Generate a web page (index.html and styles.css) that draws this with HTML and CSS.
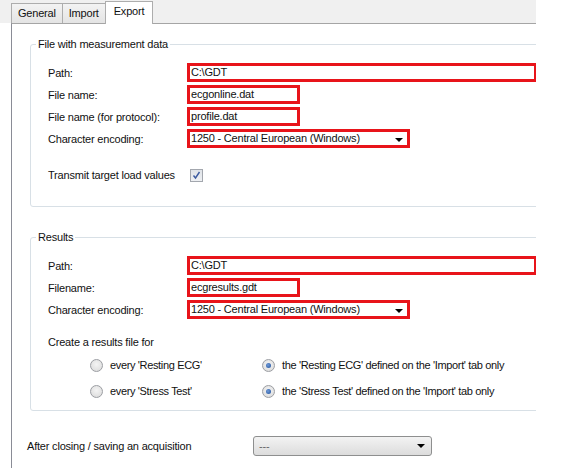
FILE: index.html
```html
<!DOCTYPE html>
<html>
<head>
<meta charset="utf-8">
<link rel="stylesheet" href="styles.css">
</head>
<body>
<div class="window">
  <div class="tabstrip">
    <div class="tab">General</div>
    <div class="tab">Import</div>
    <div class="tab active">Export</div>
  </div>
  <div class="panel">
    <fieldset class="group group-file">
      <legend>File with measurement data</legend>
      <div class="form">
        <span class="lbl">Path:</span><div class="field wide">C:\GDT</div>
        <span class="lbl">File name:</span><div class="field short">ecgonline.dat</div>
        <span class="lbl">File name (for protocol):</span><div class="field short">profile.dat</div>
        <span class="lbl">Character encoding:</span><div class="field select">1250 - Central European (Windows)<span class="caret"></span></div>
      </div>
      <div class="form check-row">
        <span class="lbl">Transmit target load values</span>
        <span class="checkbox"><svg width="11" height="11" viewBox="0 0 11 11"><path d="M2.5 5.5 L4.5 8 L8.5 2" fill="none" stroke="#3b5aa0" stroke-width="1.4"/></svg></span>
      </div>
    </fieldset>

    <fieldset class="group group-results">
      <legend>Results</legend>
      <div class="form">
        <span class="lbl">Path:</span><div class="field wide">C:\GDT</div>
        <span class="lbl">Filename:</span><div class="field short">ecgresults.gdt</div>
        <span class="lbl">Character encoding:</span><div class="field select">1250 - Central European (Windows)<span class="caret"></span></div>
      </div>
      <div class="create">Create a results file for</div>
      <div class="radios">
        <label class="opt"><span class="radio"></span>every 'Resting ECG'</label>
        <label class="opt"><span class="radio on"></span>the 'Resting ECG' defined on the 'Import' tab only</label>
        <label class="opt"><span class="radio"></span>every 'Stress Test'</label>
        <label class="opt"><span class="radio on"></span>the 'Stress Test' defined on the 'Import' tab only</label>
      </div>
    </fieldset>

    <div class="after">
      <span class="after-lbl">After closing / saving an acquisition</span>
      <div class="combo"><span>---</span><span class="caret"></span></div>
    </div>
  </div>
</div>
</body>
</html>
```

FILE: styles.css
```css
* { box-sizing: border-box; }

body {
  margin: 0;
  background: #ffffff;
  font-family: "Liberation Sans", Arial, sans-serif;
  font-size: 11px;
  letter-spacing: -0.2px;
  color: #111111;
}

.window {
  width: 536px;
  height: 468px;
  overflow: hidden;
  background: #ffffff;
}

.tabstrip {
  height: 23px;
  background: #f0f0f0;
  display: flex;
  align-items: flex-end;
  padding-left: 11px;
}

.tab {
  height: 20px;
  padding: 0 6px;
  border: 1px solid #adadad;
  border-bottom: none;
  background: linear-gradient(#f3f3f3, #e4e4e4);
  display: flex;
  align-items: center;
  margin-right: -1px;
  line-height: 1;
}

.tab.active {
  height: 23px;
  margin-bottom: -1px;
  padding: 0 8px 3px;
  background: #ffffff;
  position: relative;
  z-index: 1;
}

.panel {
  height: 445px;
  margin-left: 11px;
  border-left: 1px solid #8a8c96;
  border-top: 1px solid #a5a5a5;
  background: #ffffff;
  display: flex;
  flex-direction: column;
}

.group {
  margin: 13px -40px 0 18px;
  border: 1px solid #d8e0e6;
  border-radius: 3px;
  padding: 12px 0 24px 17px;
  min-width: 0;
}

.group legend {
  padding: 0 2px;
  margin-left: -12px;
  line-height: 14px;
}

.group-results {
  margin-top: 23px;
  padding-bottom: 9px;
}

.form {
  display: grid;
  grid-template-columns: 139px auto;
  row-gap: 3px;
  align-items: center;
  justify-items: start;
}

.lbl { line-height: 14px; }

.field {
  height: 19px;
  border: 3px solid #e8141a;
  padding: 0 2px 0 1px;
  display: flex;
  align-items: center;
  background: #ffffff;
  line-height: 1;
}

.field.wide { width: 350px; }
.field.short { width: 113px; }
.field.select { width: 223px; position: relative; }

.caret {
  position: absolute;
  right: 4px;
  top: 6px;
  width: 0;
  height: 0;
  border-left: 4px solid transparent;
  border-right: 4px solid transparent;
  border-top: 4px solid #000000;
}

.check-row { margin-top: 20px; }

.checkbox {
  margin-left: 3px;
  width: 13px;
  height: 13px;
  border: 1px solid #a3a7ae;
  background: linear-gradient(#dfe3e8, #eef0f3);
  display: flex;
  align-items: center;
  justify-content: center;
}

.create {
  margin-top: 16px;
  line-height: 14px;
}

.radios {
  margin-top: 6px;
  margin-left: 42px;
  display: grid;
  grid-template-columns: 172px auto;
  grid-auto-rows: 20px;
  row-gap: 6px;
  align-items: center;
  letter-spacing: -0.35px;
}

.opt {
  display: flex;
  align-items: center;
  gap: 7px;
}

.radio {
  width: 13px;
  height: 13px;
  border-radius: 50%;
  border: 1px solid #9c9ea3;
  background: radial-gradient(circle at 50% 40%, #f4f4f4 0%, #d8d8d8 100%);
  display: flex;
  align-items: center;
  justify-content: center;
}

.radio.on::after {
  content: "";
  width: 5px;
  height: 5px;
  border-radius: 50%;
  background: radial-gradient(circle at 40% 40%, #6f9ad8, #1f4f99);
}

.after {
  margin-top: 25px;
  margin-left: 15px;
  display: flex;
  align-items: center;
}

.after-lbl {
  width: 226px;
  line-height: 14px;
}

.combo {
  position: relative;
  width: 179px;
  height: 20px;
  border: 1px solid #8e8f8f;
  border-radius: 3px;
  background: linear-gradient(#f3f3f3, #dcdcdc);
  padding-left: 5px;
  display: flex;
  align-items: center;
  color: #666666;
}

.combo .caret { top: 7px; right: 6px; }
```
